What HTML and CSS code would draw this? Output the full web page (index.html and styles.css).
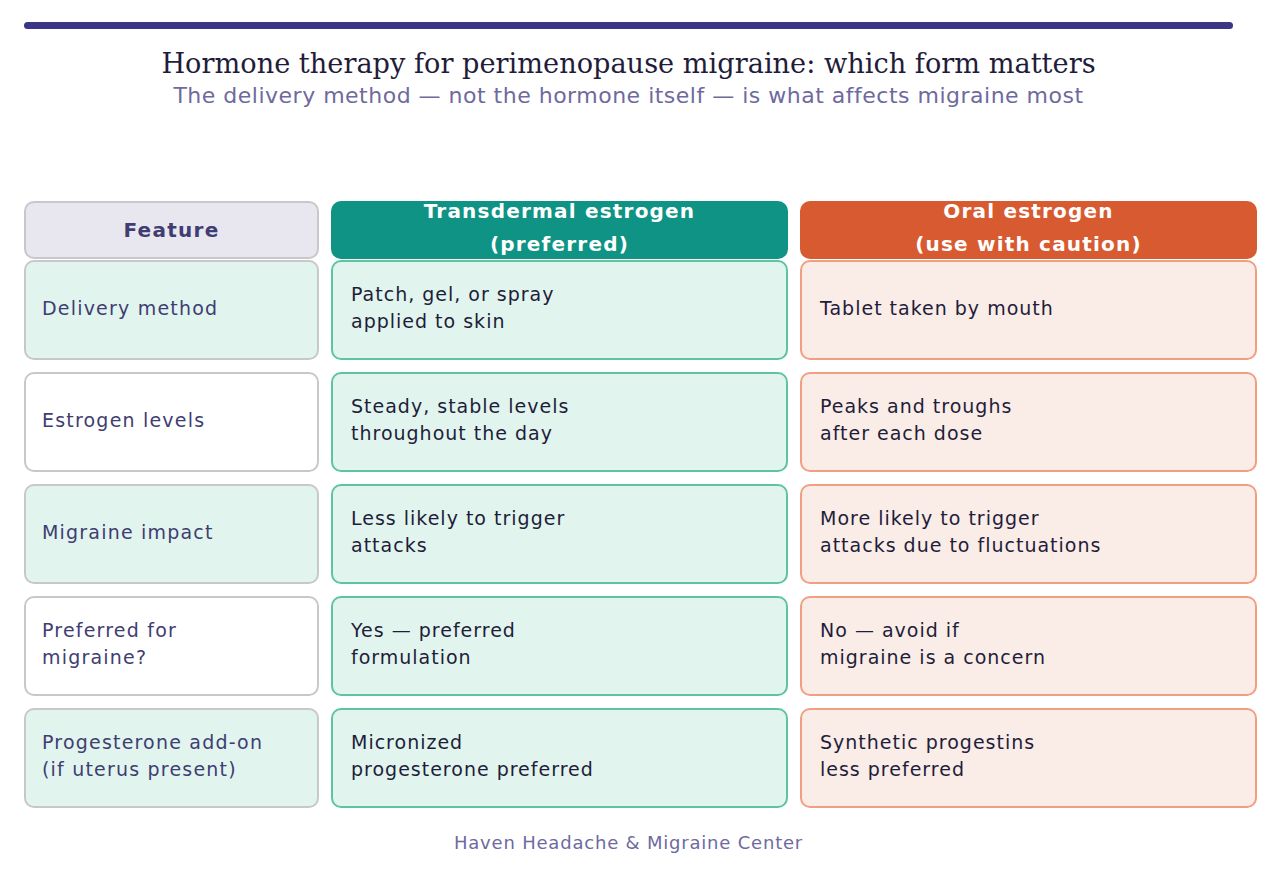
FILE: index.html
```html
<!DOCTYPE html>
<html lang="en">
<head>
<meta charset="utf-8">
<title>Hormone therapy for perimenopause migraine</title>
<link rel="stylesheet" href="styles.css">
</head>
<body>
<div class="page">
  <div class="topbar"></div>
  <h1 class="title">Hormone therapy for perimenopause migraine: which form matters</h1>
  <p class="subtitle">The delivery method — not the hormone itself — is what affects migraine most</p>

  <div class="table-head">
    <div class="hcell hfeature">Feature</div>
    <div class="hcell htrans">Transdermal estrogen<br>(preferred)</div>
    <div class="hcell horal">Oral estrogen<br>(use with caution)</div>
  </div>

  <div class="table-body">
    <div class="cell feat tint">Delivery method</div>
    <div class="cell trans">Patch, gel, or spray<br>applied to skin</div>
    <div class="cell oral">Tablet taken by mouth</div>

    <div class="cell feat">Estrogen levels</div>
    <div class="cell trans">Steady, stable levels<br>throughout the day</div>
    <div class="cell oral">Peaks and troughs<br>after each dose</div>

    <div class="cell feat tint">Migraine impact</div>
    <div class="cell trans">Less likely to trigger<br>attacks</div>
    <div class="cell oral">More likely to trigger<br>attacks due to fluctuations</div>

    <div class="cell feat">Preferred for<br>migraine?</div>
    <div class="cell trans">Yes — preferred<br>formulation</div>
    <div class="cell oral">No — avoid if<br>migraine is a concern</div>

    <div class="cell feat tint">Progesterone add-on<br>(if uterus present)</div>
    <div class="cell trans">Micronized<br>progesterone preferred</div>
    <div class="cell oral">Synthetic progestins<br>less preferred</div>
  </div>

  <p class="footer">Haven Headache &amp; Migraine Center</p>
</div>
</body>
</html>
```

FILE: styles.css
```css
* { box-sizing: border-box; }
html, body { margin: 0; padding: 0; background: #ffffff; }
body { font-family: "DejaVu Sans", "Inter", sans-serif; color: #1f1d3a; }

.page {
  width: 1209px;
  margin-left: 24px;
  padding-top: 22px;
}

.topbar {
  height: 7px;
  border-radius: 4px;
  background: #3b3585;
}

.title {
  margin: 18px 0 0;
  text-align: center;
  font-family: "DejaVu Serif", "Liberation Serif", serif;
  font-weight: 400;
  font-size: 27.2px;
  line-height: 34px;
  color: #1f1d3a;
}

.subtitle {
  margin: 0;
  text-align: center;
  font-size: 22px;
  letter-spacing: 0.5px;
  line-height: 30px;
  color: #6e6a9e;
}

.table-head,
.table-body {
  width: 1233px;
  display: grid;
  grid-template-columns: 295px 457px 457px;
  column-gap: 12px;
}

.table-head {
  margin-top: 90px;
  grid-template-rows: 58px;
}

.table-body {
  margin-top: 1px;
  grid-template-rows: repeat(5, 100px);
  row-gap: 12px;
}

.hcell {
  border-radius: 10px;
  display: flex;
  align-items: center;
  justify-content: center;
  text-align: center;
  font-weight: 700;
  font-size: 20px;
  letter-spacing: 1.2px;
  line-height: 33px;
  padding-bottom: 4px;
  color: #ffffff;
  white-space: nowrap;
  overflow: visible;
}
.hfeature {
  background: #e8e6ee;
  border: 2px solid #c8c8cc;
  color: #3f3d72;
  letter-spacing: 1.3px;
  padding-bottom: 0;
}
.htrans { background: #0e9384; }
.horal { background: #d85a30; }

.cell {
  border-radius: 10px;
  border: 2px solid;
  display: flex;
  align-items: center;
  padding: 0 18px 4px;
  font-size: 19px;
  letter-spacing: 1px;
  line-height: 27px;
  color: #1f1d3a;
}

.feat {
  background: #ffffff;
  border-color: #c8c8c8;
  color: #3f3d72;
  letter-spacing: 1.2px;
  padding-left: 16px;
}
.feat.tint { background: #e1f5ee; }
.trans {
  background: #e1f5ee;
  border-color: #5ec4a0;
}
.oral {
  background: #faece7;
  border-color: #f0a080;
}

.footer {
  margin: 22px 0 0;
  text-align: center;
  font-size: 18px;
  letter-spacing: 0.8px;
  line-height: 26px;
  color: #6e6a9e;
}
```
